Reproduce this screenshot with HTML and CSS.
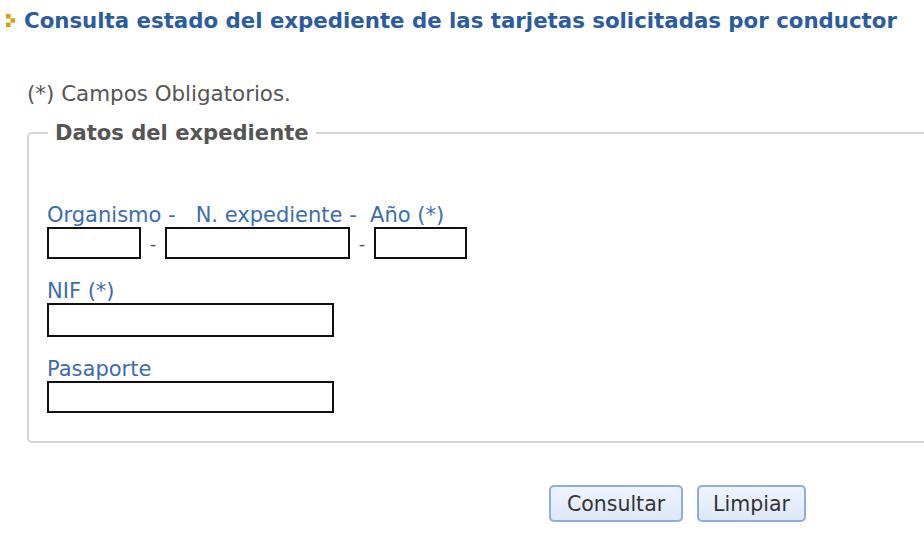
FILE: index.html
```html
<!DOCTYPE html>
<html lang="es">
<head>
<meta charset="utf-8">
<title>Consulta estado del expediente</title>
<link rel="stylesheet" href="styles.css">
</head>
<body>
<div class="page">
  <h1 class="title">
    <svg class="bullet" width="9" height="13" viewBox="0 0 9 13" aria-hidden="true">
      <rect x="0" y="0" width="4.5" height="4.5" fill="#d1a10f"/>
      <rect x="4.5" y="4.2" width="4.5" height="4.5" fill="#d1a10f"/>
      <rect x="0" y="8.5" width="4.5" height="4.5" fill="#d1a10f"/>
    </svg>
    <span>Consulta estado del expediente de las tarjetas solicitadas por conductor</span>
  </h1>
  <p class="note">(*) Campos Obligatorios.</p>
  <fieldset class="box">
    <legend class="legend">Datos del expediente</legend>
    <div class="group">
      <div class="label">Organismo -&nbsp;&nbsp;&nbsp;N. expediente -&nbsp;&nbsp;Año (*)</div>
      <div class="row">
        <input class="inp w-org" type="text">
        <span class="dash">-</span>
        <input class="inp w-exp" type="text">
        <span class="dash">-</span>
        <input class="inp w-ano" type="text">
      </div>
    </div>
    <div class="group">
      <div class="label">NIF (*)</div>
      <input class="inp w-long h-big" type="text">
    </div>
    <div class="group">
      <div class="label">Pasaporte</div>
      <input class="inp w-long" type="text">
    </div>
  </fieldset>
  <div class="actions">
    <button class="btn btn-consultar" type="button">Consultar</button>
    <button class="btn btn-limpiar" type="button">Limpiar</button>
  </div>
</div>
</body>
</html>
```
FILE: styles.css
```css
html, body {
  margin: 0;
  padding: 0;
  background: #ffffff;
}
body {
  font-family: "DejaVu Sans", Verdana, sans-serif;
  width: 924px;
  height: 536px;
  overflow: hidden;
}
.page {
  padding: 6px 0 0 0;
  overflow: hidden;
}
.title {
  display: flex;
  align-items: center;
  gap: 9px;
  margin: 0;
  padding-left: 6px;
  font-size: 21.3px;
  font-weight: bold;
  color: #2b5c9f;
  white-space: nowrap;
  height: 28px;
}
.bullet {
  flex: none;
}
.note {
  margin: 48px 0 0 27px;
  font-size: 21.4px;
  color: #555555;
  line-height: 24px;
}
.box {
  margin: 15px -12px 0 27px;
  padding: 58px 20px 28px 18px;
  border: 2px solid #d4d4d4;
  border-radius: 5px;
  min-width: 0;
}
.legend {
  margin-left: 1px;
  padding: 0 7px;
  font-size: 21.1px;
  line-height: 24px;
  font-weight: bold;
  color: #555555;
}
.group {
  display: flex;
  flex-direction: column;
  align-items: flex-start;
}
.group + .group {
  margin-top: 20px;
}
.label {
  font-size: 21px;
  line-height: 24px;
  color: #3d6cae;
  white-space: pre;
}
.row {
  display: flex;
  align-items: center;
}
.dash {
  width: 24px;
  text-align: center;
  color: #555555;
  font-size: 18px;
}
.inp {
  box-sizing: border-box;
  height: 32px;
  border: 2px solid #111111;
  margin: 0;
  padding: 0;
  background: #ffffff;
  font: inherit;
}
.w-org { width: 94px; }
.w-exp { width: 185px; }
.w-ano { width: 93px; }
.w-long { width: 287px; }
.h-big { height: 34px; }
.actions {
  display: flex;
  gap: 14px;
  margin: 42px 0 0 549px;
}
.btn {
  box-sizing: border-box;
  height: 37px;
  border: 2px solid #8fadd6;
  border-radius: 5px;
  background: linear-gradient(#eef4fd, #dbe8fa);
  font-family: "DejaVu Sans", Verdana, sans-serif;
  font-size: 20.5px;
  color: #333333;
  padding: 0;
}
.btn-consultar { width: 134px; }
.btn-limpiar { width: 109px; }
```
